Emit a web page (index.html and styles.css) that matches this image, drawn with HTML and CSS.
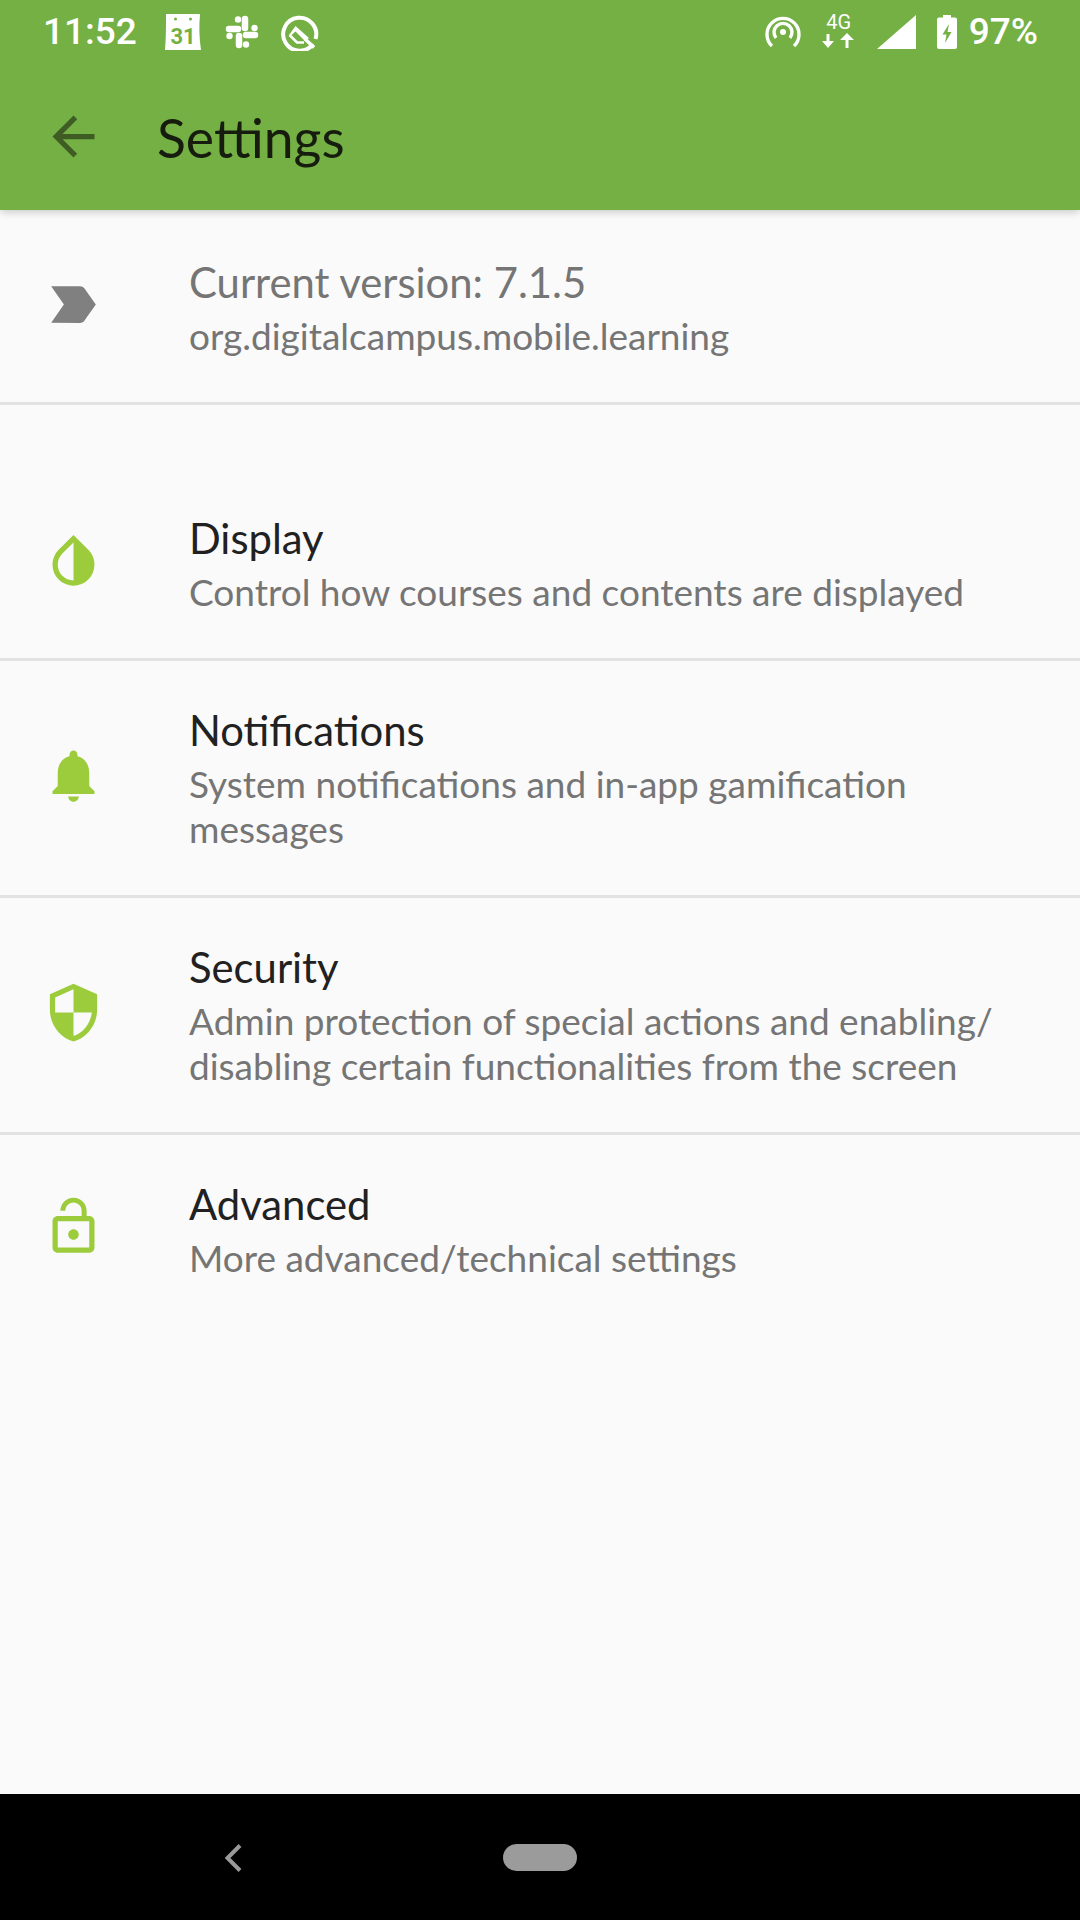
FILE: index.html
```html
<!DOCTYPE html>
<html lang="en">
<head>
    <meta charset="UTF-8">
    <meta name="viewport" content="width=device-width, initial-scale=1.0">
    <title>Settings</title>
    <link rel="stylesheet" href="styles.css">
</head>
<body>
    <div class="screen">
        <header class="top">
            <div class="status-bar">
                <span class="clock">11:52</span>
                <svg class="st-calendar" width="36" height="38" viewBox="0 0 36 38">
                    <path fill="#fff" d="M1 1h34c-1 12-1 23 1 36H0C1 25 1 13 1 1z"/>
                    <circle cx="10.500" cy="6" r="1.500" fill="#74b044"/>
                    <circle cx="25.500" cy="6" r="1.500" fill="#74b044"/>
                    <text class="cal-num" x="18" y="31" text-anchor="middle">31</text>
                </svg>
                <svg class="st-slack" width="34" height="34" viewBox="0 0 34 34" fill="#fff" stroke="#fff" stroke-width="6.500" stroke-linecap="round">
                    <path d="M4 14h9M20 4v9M21 20h9M14 21v9"/>
                    <g stroke="none">
                        <circle cx="13" cy="4.500" r="3.200"/>
                        <circle cx="29.500" cy="13" r="3.200"/>
                        <circle cx="21" cy="29.500" r="3.200"/>
                        <circle cx="4.500" cy="21" r="3.200"/>
                    </g>
                </svg>
                <svg class="st-q" width="38" height="38" viewBox="0 0 38 38">
                    <path fill="none" stroke="#fff" stroke-width="4" d="M32 31A16.500 16.500 0 1 1 34.500 26"/>
                    <path fill="#fff" d="M14.500 13 28 25l-4 3-9.500-9.500-5 4.500L8 22z"/>
                    <path fill="none" stroke="#fff" stroke-width="2.500" d="M8.500 22 16 29.500h7"/>
                    <path fill="none" stroke="#fff" stroke-width="3.500" d="M24 26l9 8.500"/>
                </svg>
                <span class="spacer"></span>
                <svg class="st-hotspot" width="36" height="32" viewBox="0 0 36 32" fill="none" stroke="#fff" stroke-width="3.400">
                    <path d="M7 30A16 16 0 1 1 29 30"/>
                    <path d="M11 22A9 9 0 1 1 25 22"/>
                    <circle cx="18" cy="16" r="3" fill="#fff" stroke="none"/>
                </svg>
                <div class="st-net">
                    <span class="net-label">4G</span>
                    <svg width="36" height="15" viewBox="0 20 36 15">
                        <path fill="#fff" d="M5.500 21h3v7h4.500l-6 7-6-7h4.500zM24.500 35h3v-8h5.500l-7-7-7 7h5.500z"/>
                    </svg>
                </div>
                <svg class="st-signal" width="39" height="34" viewBox="0 0 39 34">
                    <path fill="#fff" d="M0 34 39 0v34z"/>
                </svg>
                <svg class="st-battery" width="20" height="34" viewBox="0 0 20 34">
                    <path fill="#fff" fill-rule="evenodd" d="M6 0h8v2.500h4a2 2 0 0 1 2 2V32a2 2 0 0 1-2 2H2a2 2 0 0 1-2-2V4.500a2 2 0 0 1 2-2h4zM12 9 5.500 19.500h4L8 28l6.500-11h-4z"/>
                </svg>
                <span class="battery-text">97%</span>
            </div>
            <div class="app-bar">
                <svg class="back" width="63" height="63" viewBox="0 0 24 24">
                    <path d="M20 11H7.830l5.590-5.590L12 4l-8 8 8 8 1.410-1.410L7.830 13H20v-2z"/>
                </svg>
                <h1 class="title">Settings</h1>
            </div>
        </header>

        <main class="list">
            <div class="row row-version">
                <svg class="icon icon-grey" viewBox="0 0 24 24">
                    <path d="M3.500 18.990l11 .01c.67 0 1.270-.33 1.630-.84L20.500 12l-4.370-6.160c-.36-.51-.96-.84-1.630-.84l-11 .01L8.340 12 3.500 18.990z"/>
                </svg>
                <div class="row-text">
                    <div class="row-title grey">Current version: 7.1.5</div>
                    <div class="row-sub">org.digitalcampus.mobile.learning</div>
                </div>
            </div>

            <div class="row row-first">
                <svg class="icon" viewBox="0 0 24 24">
                    <path d="M17.660 7.930L12 2.270 6.340 7.930c-3.120 3.120-3.120 8.190 0 11.310C7.900 20.800 9.950 21.580 12 21.580c2.050 0 4.100-.78 5.660-2.340 3.120-3.120 3.120-8.190 0-11.310zM12 19.590c-1.600 0-3.110-.62-4.240-1.760C6.620 16.690 6 15.190 6 13.590s.62-3.110 1.760-4.240L12 5.100v14.490z"/>
                </svg>
                <div class="row-text">
                    <div class="row-title">Display</div>
                    <div class="row-sub">Control how courses and contents are displayed</div>
                </div>
            </div>

            <div class="row">
                <svg class="icon" viewBox="0 0 24 24">
                    <path d="M12 22c1.100 0 2-.9 2-2h-4c0 1.100.89 2 2 2zm6-6v-5c0-3.070-1.640-5.640-4.500-6.320V4c0-.83-.67-1.500-1.500-1.500s-1.500.67-1.500 1.500v.68C7.630 5.360 6 7.920 6 11v5l-2 2v1h16v-1l-2-2z"/>
                </svg>
                <div class="row-text">
                    <div class="row-title">Notifications</div>
                    <div class="row-sub">System notifications and in-app gamification messages</div>
                </div>
            </div>

            <div class="row">
                <svg class="icon" viewBox="0 0 24 24">
                    <path d="M12 1L3 5v6c0 5.550 3.840 10.740 9 12 5.160-1.260 9-6.450 9-12V5l-9-4zm0 10.990h7c-.53 4.120-3.280 7.790-7 8.940V12H5V6.300l7-3.110v8.800z"/>
                </svg>
                <div class="row-text">
                    <div class="row-title">Security</div>
                    <div class="row-sub">Admin protection of special actions and enabling/<br>disabling certain functionalities from the screen</div>
                </div>
            </div>

            <div class="row row-last">
                <svg class="icon" viewBox="0 0 24 24">
                    <path d="M12 17c1.100 0 2-.9 2-2s-.9-2-2-2-2 .9-2 2 .9 2 2 2zm6-9h-1V6c0-2.760-2.240-5-5-5S7 3.240 7 6h1.900c0-1.710 1.390-3.100 3.100-3.100 1.710 0 3.100 1.390 3.100 3.100v2H6c-1.100 0-2 .9-2 2v10c0 1.100.9 2 2 2h12c1.100 0 2-.9 2-2V10c0-1.100-.9-2-2-2zm0 12H6V10h12v10z"/>
                </svg>
                <div class="row-text">
                    <div class="row-title">Advanced</div>
                    <div class="row-sub">More advanced/technical settings</div>
                </div>
            </div>
        </main>

        <nav class="nav-bar">
            <svg class="nav-back" width="20" height="28" viewBox="0 0 20 28">
                <path fill="none" stroke="#999" stroke-width="4" d="M16 1.500 3.500 14 16 26.500"/>
            </svg>
            <span class="nav-pill"></span>
        </nav>
    </div>
</body>
</html>
```

FILE: styles.css
```css
html, body {
    margin: 0;
    padding: 0;
}

body {
    font-family: "Lato", sans-serif;
    background-color: #fafafa;
}

.screen {
    width: 1080px;
    height: 1920px;
    display: flex;
    flex-direction: column;
    overflow: hidden;
}

.top {
    background-color: #74b044;
    height: 210px;
    box-shadow: 0 2px 8px rgba(0, 0, 0, 0.2);
    position: relative;
    z-index: 1;
}

.status-bar {
    height: 63px;
    display: flex;
    align-items: center;
    padding: 0 42px 0 43px;
    color: #fff;
    font-family: "Roboto", sans-serif;
}

.clock {
    font-size: 37px;
    font-weight: 500;
    width: 122px;
}

.battery-text {
    font-size: 37px;
    font-weight: 500;
    margin-left: 12px;
}

.cal-num {
    font-family: "Roboto", sans-serif;
    font-size: 22px;
    font-weight: 700;
    fill: #74b044;
}

.st-slack {
    margin-left: 24px;
}

.st-q {
    margin-left: 22px;
}

.spacer {
    flex: 1;
}

.st-net {
    width: 36px;
    margin-left: 20px;
    margin-bottom: 3px;
    display: flex;
    flex-direction: column;
    align-items: center;
}

.net-label {
    font-size: 20px;
    line-height: 21px;
}

.st-signal {
    margin-left: 20px;
}

.st-battery {
    margin-left: 21px;
}

.app-bar {
    height: 147px;
    display: flex;
    align-items: center;
    padding-left: 42px;
}

.back {
    fill: #3e5c24;
}

.title {
    margin: 0 0 0 52px;
    font-size: 53.500px;
    font-weight: 400;
    color: #161c0e;
}

.list {
    flex: 1;
}

.row {
    display: flex;
    align-items: center;
    padding: 44px 42px 44px 42px;
    border-bottom: 3px solid #e2e2e2;
}

.row-version {
    padding-top: 47px;
}

.row-first {
    margin-top: 63px;
    padding-top: 45px;
}

.row-last {
    padding-bottom: 38px;
    border-bottom: none;
}

.icon {
    width: 63px;
    height: 63px;
    flex: none;
    fill: #9ccc3c;
    margin-bottom: 6px;
}

.icon-grey {
    fill: #808080;
}

.row-text {
    margin-left: 84px;
    flex: 1;
}

.row-title {
    font-size: 41.800px;
    line-height: 50px;
    margin-bottom: 6px;
    color: #212121;
}

.row-title.grey {
    color: #757575;
}

.row-sub {
    font-size: 37px;
    line-height: 45px;
    color: #757575;
}

.nav-bar {
    height: 126px;
    flex: none;
    background-color: #000;
    position: relative;
    display: flex;
    align-items: center;
    padding-left: 224px;
}

.nav-back {
    margin-top: 1px;
}

.nav-pill {
    width: 74px;
    height: 27px;
    margin-left: 259px;
    border-radius: 14px;
    background-color: #9b9b9b;
}
```
